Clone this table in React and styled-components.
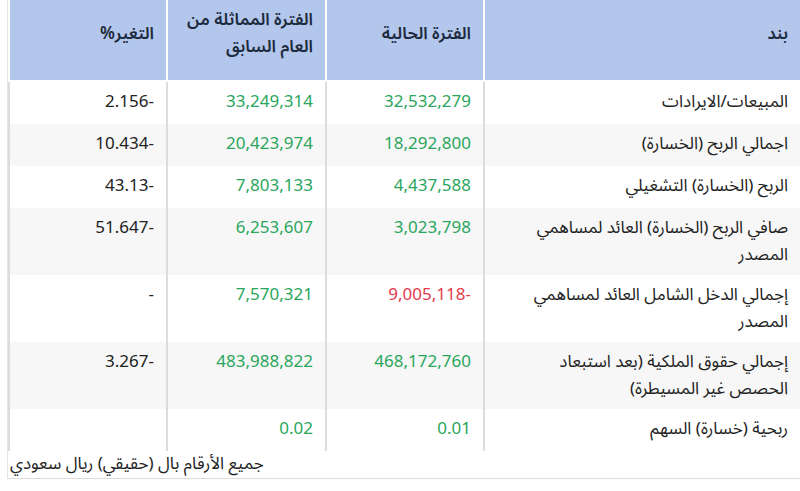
import React from 'react';
import styled, { createGlobalStyle } from 'styled-components';

const GlobalStyle = createGlobalStyle`
  body {
    margin: 0;
    background: #ffffff;
    font-family: "Noto Sans Arabic", "Noto Sans", "DejaVu Sans", sans-serif;
  }
`;

const Wrapper = styled.div`
  margin-left: 7px;
  width: 793px;
  border-left: 1px solid #e4e4e4;
  border-bottom: 1px solid #dcdcdc;
`;

const Table = styled.table`
  direction: rtl;
  width: 792px;
  table-layout: fixed;
  border-collapse: separate;
  border-spacing: 0;
  font-size: 17px;
  color: #222;
`;

const HeadCell = styled.th`
  box-sizing: border-box;
  width: ${(p) => p.$w}px;
  height: 82px;
  padding: 0 12px 12px;
  background: #b3c6ec;
  color: #1c2b3d;
  font-weight: 600;
  text-align: right;
  vertical-align: middle;
  line-height: 27px;
  border-left: 2px solid #ffffff;
  border-bottom: 2px solid #ffffff;
`;

const Row = styled.tr`
  background: ${(p) => (p.$alt ? '#f7f7f7' : '#ffffff')};
`;

const Cell = styled.td`
  box-sizing: border-box;
  height: 42px;
  padding: 7px 12px 6px;
  line-height: 27px;
  text-align: right;
  vertical-align: top;
  border-left: 2px solid #dcdcdc;
  color: ${(p) => (p.$tone === 'up' ? '#2aa65c' : p.$tone === 'down' ? '#e23a4e' : '#222')};
`;

const Num = styled.span`
  direction: ltr;
  unicode-bidi: isolate;
`;

const Note = styled.div`
  direction: rtl;
  text-align: left;
  font-size: 17px;
  line-height: 27px;
  color: #222;
  padding-left: 2px;
`;

const columns = [
  { label: 'بند', w: 317 },
  { label: 'الفترة الحالية', w: 158 },
  { label: 'الفترة المماثلة من العام السابق', w: 159 },
  { label: 'التغير%', w: 158 },
];

const rows = [
  { item: 'المبيعات/الايرادات', cur: '32,532,279', prev: '33,249,314', change: '2.156-' },
  { item: 'اجمالي الربح (الخسارة)', cur: '18,292,800', prev: '20,423,974', change: '10.434-' },
  { item: 'الربح (الخسارة) التشغيلي', cur: '4,437,588', prev: '7,803,133', change: '43.13-' },
  { item: 'صافي الربح (الخسارة) العائد لمساهمي المصدر', cur: '3,023,798', prev: '6,253,607', change: '51.647-' },
  { item: 'إجمالي الدخل الشامل العائد لمساهمي المصدر', cur: '9,005,118-', prev: '7,570,321', change: '-', curDown: true },
  { item: 'إجمالي حقوق الملكية (بعد استبعاد الحصص غير المسيطرة)', cur: '468,172,760', prev: '483,988,822', change: '3.267-' },
  { item: 'ربحية (خسارة) السهم', cur: '0.01', prev: '0.02', change: '' },
];

const App = () => {
  return (
    <>
      <GlobalStyle />
      <Wrapper>
        <Table>
          <thead>
            <tr>
              {columns.map((c) => (
                <HeadCell key={c.label} $w={c.w}>{c.label}</HeadCell>
              ))}
            </tr>
          </thead>
          <tbody>
            {rows.map((r, i) => (
              <Row key={r.item} $alt={i % 2 === 1}>
                <Cell>{r.item}</Cell>
                <Cell $tone={r.curDown ? 'down' : 'up'}><Num>{r.cur}</Num></Cell>
                <Cell $tone="up"><Num>{r.prev}</Num></Cell>
                <Cell><Num>{r.change}</Num></Cell>
              </Row>
            ))}
          </tbody>
        </Table>
        <Note>جميع الأرقام بال (حقيقي) ريال سعودي</Note>
      </Wrapper>
    </>
  );
};

export default App;
